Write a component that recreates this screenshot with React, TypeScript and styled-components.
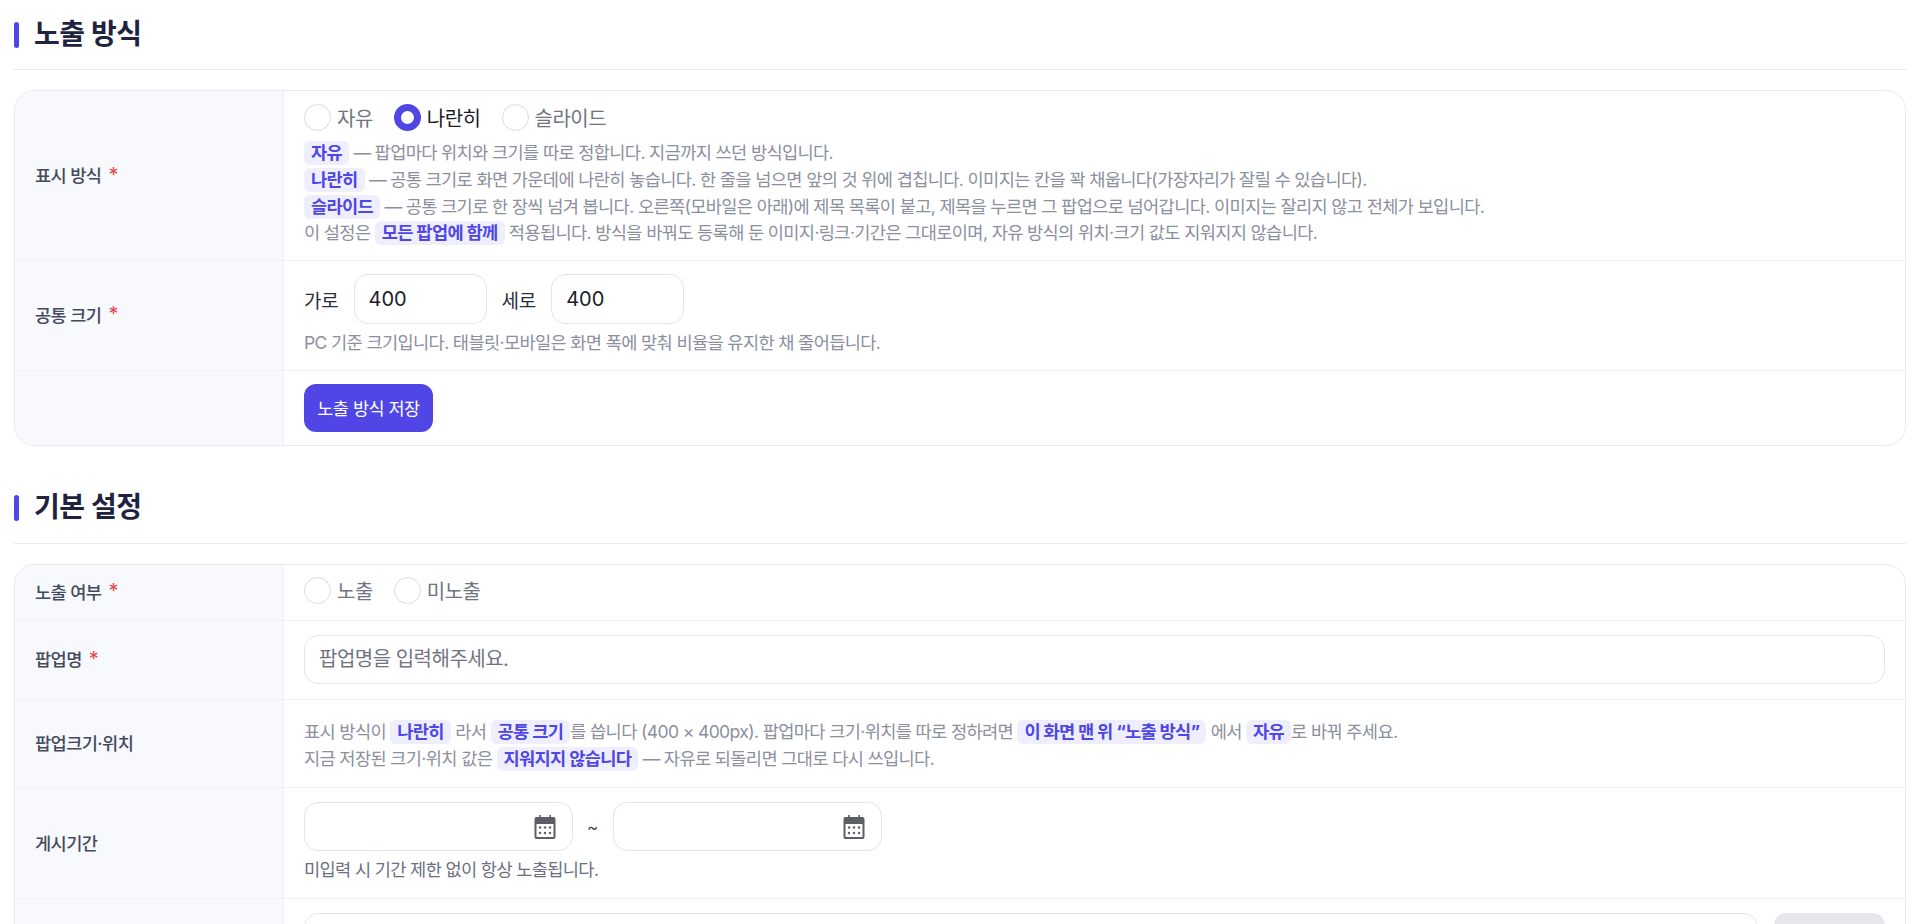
import React from "react";
import styled, { createGlobalStyle } from "styled-components";

const GlobalStyle = createGlobalStyle`
  html, body {
    margin: 0;
    height: 924px;
    overflow: hidden;
    background: #fff;
    font-family: Inter, "Noto Sans CJK KR", "Noto Sans", sans-serif;
  }
  * {
    box-sizing: border-box;
  }
`;

const Page = styled.div`
  padding: 0 14px;
`;

const Section = styled.section`
  margin-bottom: 28px;
`;

const TitleBar = styled.div`
  height: 70px;
  display: flex;
  align-items: center;
  gap: 15px;
  border-bottom: 1px solid #e8e9ee;
`;

const TitleMark = styled.span`
  width: 5px;
  height: 26px;
  border-radius: 3px;
  background: #4f46e5;
`;

const Title = styled.h2`
  margin: 0 0 2px;
  font-size: 28px;
  line-height: 36px;
  font-weight: 600;
  letter-spacing: -0.5px;
  color: #1e2340;
`;

const Card = styled.div`
  margin-top: 20px;
  border: 1px solid #e8e9ee;
  border-radius: 20px;
  overflow: hidden;
`;

const Row = styled.div`
  display: grid;
  grid-template-columns: 269px 1fr;
  border-bottom: 1px solid #eef0f3;

  &:last-child {
    border-bottom: 0;
  }
`;

const Label = styled.div`
  display: flex;
  align-items: center;
  gap: 7px;
  padding: 0 0 2px 20px;
  background: #f8f9fc;
  border-right: 1px solid #eef0f3;
  font-size: 17.6px;
  font-weight: 500;
  letter-spacing: -0.6px;
  color: #444a5e;
`;

const Required = styled.span`
  color: #e5484d;
  font-size: 20px;
  font-weight: 400;
`;

const Cell = styled.div<{ $pad?: string }>`
  padding: ${({ $pad }) => $pad ?? "13px 20px"};
  min-width: 0;
`;

const RadioGroup = styled.div`
  display: flex;
  align-items: center;
  gap: 20px;
  height: 26px;
`;

const RadioOption = styled.label`
  display: flex;
  align-items: center;
  gap: 6px;
`;

const RadioDot = styled.span<{ $on?: boolean }>`
  width: 27px;
  height: 27px;
  border-radius: 50%;
  background: #fff;
  border: ${({ $on }) => ($on ? "7px solid #4f46e5" : "1.5px solid #d9dbe1")};
`;

const RadioText = styled.span<{ $on?: boolean }>`
  font-size: 20px;
  letter-spacing: -0.5px;
  margin-right: 1px;
  color: ${({ $on }) => ($on ? "#1a1c28" : "#70747f")};
`;

const Help = styled.p<{ $top?: number; $dark?: boolean }>`
  margin: ${({ $top }) => $top ?? 0}px 0 0;
  font-size: 17.6px;
  line-height: 26.75px;
  letter-spacing: -0.65px;
  color: ${({ $dark }) => ($dark ? "#6b7080" : "#8b8f9e")};
  white-space: nowrap;
`;

const Chip = styled.b`
  display: inline-block;
  line-height: 24px;
  padding: 0 7px;
  border-radius: 6px;
  background: #eeeefd;
  color: #4f46e5;
  font-weight: 700;
`;

const SizeRow = styled.div`
  display: flex;
  align-items: center;
  gap: 15px;
`;

const SizeText = styled.span`
  font-size: 19px;
  letter-spacing: -0.2px;
  color: #2a2d3a;
`;

const SizeInput = styled.input`
  width: 133px;
  height: 50px;
  padding: 0 14px;
  border: 1.5px solid #e3e4e9;
  border-radius: 14px;
  font: inherit;
  font-size: 20px;
  color: #1a1c28;
  outline: none;
`;

const SaveButton = styled.button`
  width: 129px;
  height: 48px;
  border: 0;
  border-radius: 12px;
  background: #4f46e5;
  color: #fff;
  font: inherit;
  font-size: 17.5px;
  letter-spacing: -0.5px;
`;

const TextInput = styled.input`
  display: block;
  width: 100%;
  height: 49px;
  padding: 0 14px;
  border: 1.5px solid #e3e4e9;
  border-radius: 14px;
  font: inherit;
  font-size: 20px;
  letter-spacing: -0.5px;
  outline: none;

  &::placeholder {
    color: #70747f;
  }
`;

const DateRow = styled.div`
  display: flex;
  align-items: center;
  gap: 14px;
`;

const DateField = styled.div`
  width: 269px;
  height: 49px;
  padding: 0 16px;
  display: flex;
  align-items: center;
  justify-content: flex-end;
  border: 1.5px solid #e3e4e9;
  border-radius: 14px;
`;

const Tilde = styled.span`
  width: 12px;
  font-size: 17px;
  color: #444a5e;
`;

const FileRow = styled.div`
  display: flex;
  gap: 16px;
`;

const FileInput = styled.div`
  flex: 1;
  height: 50px;
  border: 1.5px solid #e3e4e9;
  border-radius: 14px;
`;

const FileButton = styled.div`
  width: 111px;
  height: 50px;
  border-radius: 12px;
  background: #e5e7eb;
`;

const CalendarIcon = () => (
  <svg width="22" height="24" viewBox="0 0 22 24">
    <rect x="5" y="0" width="1.6" height="4" fill="#5c5f66" />
    <rect x="15.4" y="0" width="1.6" height="4" fill="#5c5f66" />
    <rect x="0.5" y="2" width="21" height="22" rx="2" fill="#5c5f66" />
    <rect x="2.5" y="9" width="17" height="13" rx="0.5" fill="#fff" />
    {[6, 11, 16].map((x) =>
      [12.5, 18].map((y) => (
        <circle key={`${x}-${y}`} cx={x} cy={y} r="1.2" fill="#5c5f66" />
      )),
    )}
  </svg>
);

const App = () => {
  return (
    <>
      <GlobalStyle />
      <Page>
        <Section>
          <TitleBar>
            <TitleMark />
            <Title>노출 방식</Title>
          </TitleBar>
          <Card>
            <Row>
              <Label>
                표시 방식 <Required>*</Required>
              </Label>
              <Cell $pad="13px 20px 13px">
                <RadioGroup>
                  <RadioOption>
                    <RadioDot />
                    <RadioText>자유</RadioText>
                  </RadioOption>
                  <RadioOption>
                    <RadioDot $on />
                    <RadioText $on>나란히</RadioText>
                  </RadioOption>
                  <RadioOption>
                    <RadioDot />
                    <RadioText>슬라이드</RadioText>
                  </RadioOption>
                </RadioGroup>
                <Help $top={10}>
                  <Chip>자유</Chip> — 팝업마다 위치와 크기를 따로 정합니다. 지금까지 쓰던 방식입니다.
                  <br />
                  <Chip>나란히</Chip> — 공통 크기로 화면 가운데에 나란히 놓습니다. 한 줄을 넘으면 앞의 것 위에 겹칩니다. 이미지는 칸을 꽉 채웁니다(가장자리가 잘릴 수 있습니다).
                  <br />
                  <Chip>슬라이드</Chip> — 공통 크기로 한 장씩 넘겨 봅니다. 오른쪽(모바일은 아래)에 제목 목록이 붙고, 제목을 누르면 그 팝업으로 넘어갑니다. 이미지는 잘리지 않고 전체가 보입니다.
                  <br />
                  이 설정은 <Chip>모든 팝업에 함께</Chip> 적용됩니다. 방식을 바꿔도 등록해 둔 이미지·링크·기간은 그대로이며, 자유 방식의 위치·크기 값도 지워지지 않습니다.
                </Help>
              </Cell>
            </Row>
            <Row>
              <Label>
                공통 크기 <Required>*</Required>
              </Label>
              <Cell>
                <SizeRow>
                  <SizeText>가로</SizeText>
                  <SizeInput defaultValue="400" />
                  <SizeText>세로</SizeText>
                  <SizeInput defaultValue="400" />
                </SizeRow>
                <Help $top={6}>PC 기준 크기입니다. 태블릿·모바일은 화면 폭에 맞춰 비율을 유지한 채 줄어듭니다.</Help>
              </Cell>
            </Row>
            <Row>
              <Label />
              <Cell>
                <SaveButton>노출 방식 저장</SaveButton>
              </Cell>
            </Row>
          </Card>
        </Section>
        <Section>
          <TitleBar>
            <TitleMark />
            <Title>기본 설정</Title>
          </TitleBar>
          <Card>
            <Row>
              <Label>
                노출 여부 <Required>*</Required>
              </Label>
              <Cell $pad="13px 20px 16px">
                <RadioGroup>
                  <RadioOption>
                    <RadioDot />
                    <RadioText>노출</RadioText>
                  </RadioOption>
                  <RadioOption>
                    <RadioDot />
                    <RadioText>미노출</RadioText>
                  </RadioOption>
                </RadioGroup>
              </Cell>
            </Row>
            <Row>
              <Label>
                팝업명 <Required>*</Required>
              </Label>
              <Cell $pad="14px 20px 15px">
                <TextInput placeholder="팝업명을 입력해주세요." />
              </Cell>
            </Row>
            <Row>
              <Label>팝업크기·위치</Label>
              <Cell $pad="19px 20px 15px">
                <Help>
                  표시 방식이 <Chip>나란히</Chip> 라서 <Chip>공통 크기</Chip>를 씁니다 (400 × 400px). 팝업마다 크기·위치를 따로 정하려면 <Chip>이 화면 맨 위 “노출 방식”</Chip> 에서 <Chip>자유</Chip>로 바꿔 주세요.
                  <br />
                  지금 저장된 크기·위치 값은 <Chip>지워지지 않습니다</Chip> — 자유로 되돌리면 그대로 다시 쓰입니다.
                </Help>
              </Cell>
            </Row>
            <Row>
              <Label>게시기간</Label>
              <Cell $pad="14px 20px">
                <DateRow>
                  <DateField>
                    <CalendarIcon />
                  </DateField>
                  <Tilde>~</Tilde>
                  <DateField>
                    <CalendarIcon />
                  </DateField>
                </DateRow>
                <Help $top={6} $dark>
                  미입력 시 기간 제한 없이 항상 노출됩니다.
                </Help>
              </Cell>
            </Row>
            <Row>
              <Label />
              <Cell $pad="14px 20px">
                <FileRow>
                  <FileInput />
                  <FileButton />
                </FileRow>
              </Cell>
            </Row>
          </Card>
        </Section>
      </Page>
    </>
  );
};

export default App;
